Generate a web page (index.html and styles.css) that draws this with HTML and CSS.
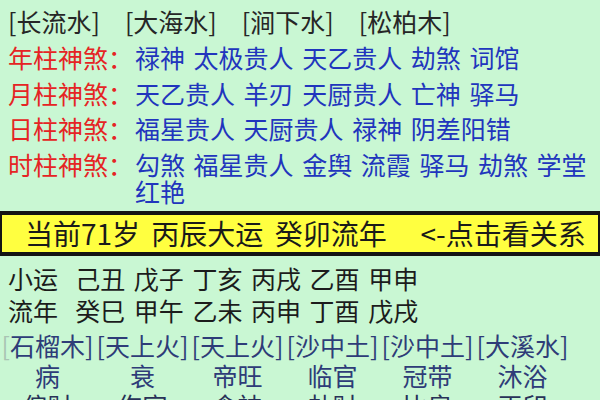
FILE: index.html
```html
<!DOCTYPE html>
<html lang="zh-CN">
<head>
<meta charset="utf-8">
<title>神煞</title>
<link rel="stylesheet" href="styles.css">
</head>
<body>
<div class="top">
  <div class="nayin-top">
    <span>[长流水]</span><span>[大海水]</span><span>[涧下水]</span><span>[松柏木]</span>
  </div>
  <div class="shensha">
    <div class="ss-row"><span class="lbl">年柱神煞：</span><span class="vals">禄神 太极贵人 天乙贵人 劫煞 词馆</span></div>
    <div class="ss-row"><span class="lbl">月柱神煞：</span><span class="vals">天乙贵人 羊刃 天厨贵人 亡神 驿马</span></div>
    <div class="ss-row"><span class="lbl">日柱神煞：</span><span class="vals">福星贵人 天厨贵人 禄神 阴差阳错</span></div>
    <div class="ss-row"><span class="lbl">时柱神煞：</span><span class="vals">勾煞 福星贵人 金舆 流霞 驿马 劫煞 学堂 红艳</span></div>
  </div>
</div>
<div class="band">当前71岁 丙辰大运 癸卯流年   &lt;-点击看关系</div>
<div class="yun">
  <div class="yun-row">小运  己丑 戊子 丁亥 丙戌 乙酉 甲申</div>
  <div class="yun-row">流年  癸巳 甲午 乙未 丙申 丁酉 戊戌</div>
</div>
<div class="grid nayin">
  <span><i class="ghost">[</i>石榴木]</span><span>[天上火]</span><span>[天上火]</span><span>[沙中土]</span><span>[沙中土]</span><span>[大溪水]</span>
</div>
<div class="grid stage">
  <span>病</span><span>衰</span><span>帝旺</span><span>临官</span><span>冠带</span><span>沐浴</span>
</div>
<div class="grid shishen">
  <span>偏财</span><span>伤官</span><span>食神</span><span>劫财</span><span>比肩</span><span>正印</span>
</div>
</body>
</html>
```
FILE: styles.css
```css
html, body {
  margin: 0;
  padding: 0;
}
body {
  width: 600px;
  height: 400px;
  overflow: hidden;
  background: #c9f7d3;
  font-family: "Noto Sans CJK SC", "Noto Sans", sans-serif;
  font-size: 25px;
  color: #1e1e1e;
}
.top {
  padding: 6px 8px 0 8px;
}
.nayin-top {
  display: flex;
  gap: 25px;
  line-height: 30px;
  color: #262626;
}
.shensha {
  margin-top: 8px;
  display: flex;
  flex-direction: column;
  gap: 8.5px;
}
.ss-row {
  display: flex;
  line-height: 27px;
}
.lbl {
  color: #e52424;
  flex: none;
  width: 127px;
}
.vals {
  color: #2135bd;
  word-spacing: 3px;
  flex: 1;
}
.band {
  margin-top: 6px;
  background: #ffff40;
  border: 2px solid #141414;
  border-top-width: 4px;
  border-bottom-width: 4px;
  height: 37px;
  line-height: 37px;
  font-size: 28px;
  padding-left: 23px;
  white-space: pre;
  word-spacing: 5px;
  color: #1a1a1a;
}
.yun {
  padding: 6px 8px 0 8px;
}
.yun-row {
  line-height: 32px;
  white-space: pre;
  word-spacing: 3px;
  color: #1c1c1c;
}
.grid {
  display: grid;
  grid-template-columns: repeat(6, 95px);
  line-height: 30px;
  text-align: center;
  color: #2e3c78;
}
.grid span {
  white-space: nowrap;
}
.nayin {
  margin-top: 4px;
}
.ghost {
  font-style: normal;
  color: #a9c4b3;
}
.shishen {
  color: #283258;
}
```
